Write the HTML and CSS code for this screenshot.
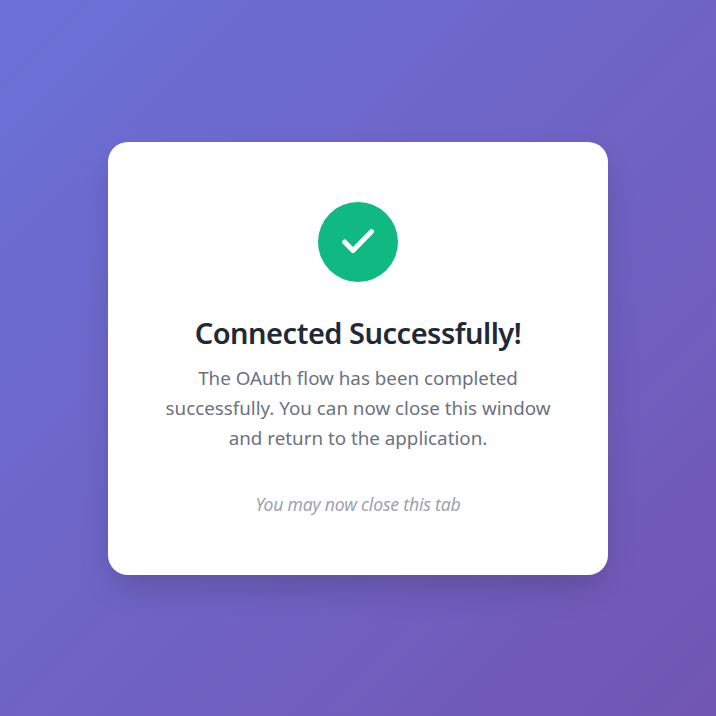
FILE: index.html
```html
<!DOCTYPE html>
<html lang="en">
<head>
<meta charset="UTF-8">
<title>Connected Successfully</title>
<link rel="stylesheet" href="styles.css">
</head>
<body>
<main class="card">
  <div class="icon">
    <svg viewBox="0 0 40 40" width="40" height="40" fill="none" stroke="#fff" stroke-width="5" stroke-linecap="round" stroke-linejoin="round"><path d="M6.6 20L15 28.5L33.6 9.6"/></svg>
  </div>
  <h1 class="title">Connected Successfully!</h1>
  <p class="message"><span class="line">The OAuth flow has been completed</span><span class="line">successfully. You can now close this window</span><span class="line">and return to the application.</span></p>
  <p class="note">You may now close this tab</p>
</main>
</body>
</html>
```

FILE: styles.css
```css
* { box-sizing: border-box; margin: 0; padding: 0; }
body {
  height: 100vh;
  display: flex;
  align-items: center;
  justify-content: center;
  background: linear-gradient(135deg, #6b71d7 0%, #7256b3 100%);
  font-family: "Segoe UI", "Noto Sans", sans-serif;
}
.card {
  width: 500px;
  height: 433px;
  padding: 60px 40px;
  background: #fff;
  border-radius: 20px;
  box-shadow: 0 16px 34px -6px rgba(0, 0, 0, 0.18);
  text-align: center;
}
.icon {
  width: 80px;
  height: 80px;
  margin: 0 auto 30px;
  display: flex;
  align-items: center;
  justify-content: center;
  border-radius: 50%;
  background: #10b981;
}
.title {
  font-size: 29px;
  font-weight: 600;
  line-height: 42px;
  letter-spacing: -0.5px;
  margin-bottom: 9px;
  color: #1f2937;
  white-space: nowrap;
}
.message { font-size: 18.8px; line-height: 30px; color: #6b7280; }
.line { display: block; white-space: nowrap; }
.note { margin-top: 39px; font-size: 17.6px; line-height: 24px; letter-spacing: -0.2px; font-style: italic; color: #9ca3af; }
```
